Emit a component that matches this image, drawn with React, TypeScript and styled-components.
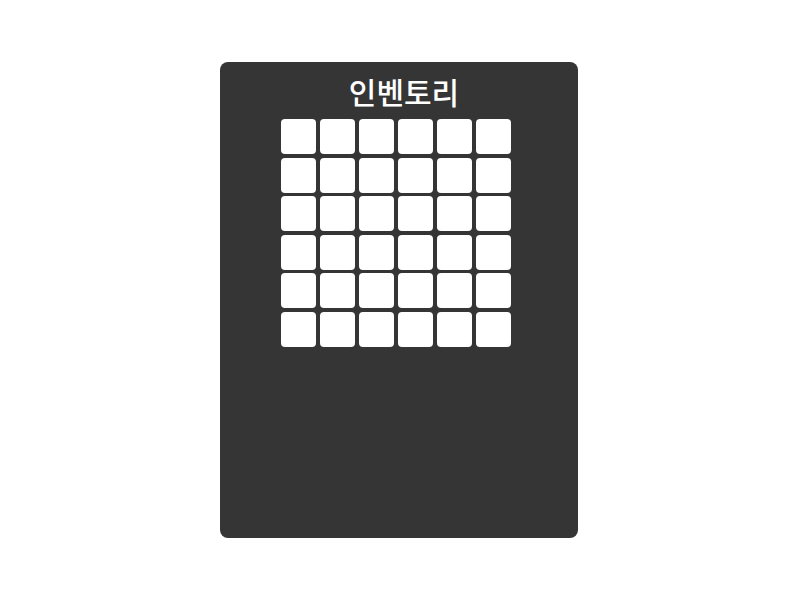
import React from "react";
import styled, { createGlobalStyle } from "styled-components";

const Global = createGlobalStyle`
  html, body { margin: 0; padding: 0; background: #ffffff; }
  body { font-family: "Noto Sans CJK KR", "Noto Sans", sans-serif; }
`;

const Page = styled.div`
  width: 800px;
  height: 600px;
  display: flex;
  align-items: center;
  justify-content: center;
`;

const Panel = styled.div`
  width: 358px;
  height: 476px;
  margin-left: -2px;
  background: #353535;
  border-radius: 8px;
  display: flex;
  flex-direction: column;
  align-items: flex-start;
  box-sizing: border-box;
  padding-top: 9px;
`;

const Title = styled.h1`
  margin: 0;
  align-self: stretch;
  text-align: center;
  padding-left: 10px;
  color: #ffffff;
  font-size: 30px;
  font-weight: 500;
  line-height: 40px;
  height: 40px;
`;

const Grid = styled.div`
  margin: 8px 0 0 61px;
  display: grid;
  grid-template-columns: repeat(6, 35px);
  grid-auto-rows: 35px;
  gap: 3.6px 4px;
`;

const Slot = styled.div`
  background: #ffffff;
  border-radius: 4px;
`;

export default function App() {
  const slots = Array.from({ length: 36 }, (_, i) => i);
  return (
    <>
      <Global />
      <Page>
        <Panel>
          <Title>인벤토리</Title>
          <Grid>
            {slots.map((i) => (
              <Slot key={i} />
            ))}
          </Grid>
        </Panel>
      </Page>
    </>
  );
}
